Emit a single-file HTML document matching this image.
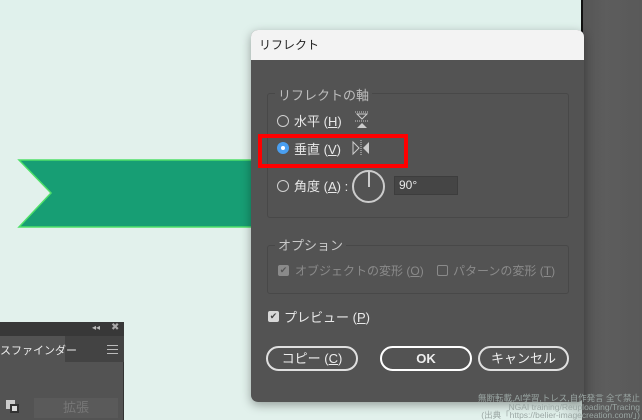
<!DOCTYPE html>
<html><head><meta charset="utf-8"><style>
*{margin:0;padding:0;box-sizing:border-box}
body{width:642px;height:420px;overflow:hidden;position:relative;background:#e2f1ec;font-family:"Liberation Sans","Noto Sans CJK JP",sans-serif;font-size:13px;color:#e8e8e8}
.a{position:absolute;white-space:nowrap}
u{text-decoration:underline}
.rad{position:absolute;width:12px;height:12px;border:1.5px solid #d0d0d0;border-radius:50%}
.btn{position:absolute;height:25px;border:2px solid #e0e0e0;border-radius:13px;text-align:center;line-height:21px;font-size:13px;color:#eee}
.cb{position:absolute;width:11px;height:11px;border-radius:2px}
</style></head><body>
<div class="a" style="left:0;top:0;width:582px;height:30px;background:#e0f1ec"></div>
<div class="a" style="left:582px;top:0;width:60px;height:420px;background:linear-gradient(90deg,#555,#5d5d5d 40%,#595959)"></div>
<div class="a" style="left:581px;top:0;width:2px;height:32px;background:#111"></div>
<div class="a" style="left:560px;top:200px;width:22px;height:220px;background:linear-gradient(90deg,#e2f1ec,#c9d6d2)"></div>
<svg class="a" style="left:0;top:150px" width="260" height="90"><polygon points="19,10 252,10 252,77 19,77 51,43" fill="#179e74" stroke="#4fe06a" stroke-width="1.5"/></svg>

<div class="a" style="left:0;top:322px;width:124px;height:98px;background:#535353;border-right:1px solid #333"></div>
<div class="a" style="left:0;top:322px;width:124px;height:14px;background:#383838"></div>
<div class="a" style="left:92px;top:323px;font-size:8px;color:#bbb">◂◂</div>
<div class="a" style="left:111px;top:322px;font-size:10px;color:#aaa">✖</div>
<div class="a" style="left:0;top:336px;width:124px;height:26px;background:#434343"></div>
<div class="a" style="left:0;top:336px;width:65px;height:26px;background:#535353"></div>
<div class="a" style="left:0;top:342px;font-size:11px;color:#eee">スファインダー</div>
<div class="a" style="left:107px;top:345px;width:11px;height:1px;background:#bbb;box-shadow:0 4px #bbb,0 8px #bbb"></div>
<div class="a" style="left:6px;top:400px;width:9px;height:9px;background:#ccc"></div>
<div class="a" style="left:10px;top:404px;width:9px;height:9px;background:#ddd;border:2px solid #333"></div>
<div class="a" style="left:34px;top:398px;width:84px;height:20px;background:#5a5a5a;color:#777;text-align:center;line-height:20px">拡張</div>

<div class="a" style="left:251px;top:30px;width:333px;height:372px;background:#535353;border-radius:7px;box-shadow:0 3px 10px rgba(0,0,0,.35);overflow:hidden">
 <div style="height:30px;background:#f3f3f3;color:#222;padding:6px 0 0 8px;font-size:12px">リフレクト</div>
</div>
<div class="a" style="left:267px;top:93px;width:302px;height:125px;border:1px solid #484848;border-radius:3px"></div>
<div class="a" style="left:275px;top:85px;background:#535353;padding:0 3px;color:#bdbdbd">リフレクトの軸</div>
<div class="rad" style="left:277px;top:115px"></div>
<div class="a" style="left:294px;top:111px">水平 (<u>H</u>)</div>
<svg class="a" style="left:354px;top:111px" width="16" height="20"><line x1="1" y1="1" x2="15" y2="1" stroke="#ccc" stroke-dasharray="1,1"/><polygon points="3,3 13,3 8,8" fill="none" stroke="#ccc"/><line x1="1" y1="10" x2="15" y2="10" stroke="#ccc" stroke-dasharray="1,1"/><polygon points="3,17 13,17 8,12" fill="#ccc"/></svg>
<div class="a" style="left:277px;top:142px;width:12px;height:12px;border-radius:50%;background:#4a9ff0"></div>
<div class="a" style="left:281px;top:146px;width:4px;height:4px;border-radius:50%;background:#fff"></div>
<div class="a" style="left:294px;top:139px">垂直 (<u>V</u>)</div>
<svg class="a" style="left:351px;top:140px" width="20" height="16"><polygon points="2,2 2,14 8,8" fill="none" stroke="#ccc"/><line x1="10" y1="0" x2="10" y2="16" stroke="#ccc" stroke-dasharray="1,1"/><polygon points="18,2 18,14 12,8" fill="#ccc"/></svg>
<div class="a" style="left:258px;top:134px;width:150px;height:34px;border:4px solid #f00"></div>
<div class="rad" style="left:277px;top:180px"></div>
<div class="a" style="left:294px;top:176px">角度 (<u>A</u>) :</div>
<div class="a" style="left:352px;top:170px;width:33px;height:33px;border:2px solid #ccc;border-radius:50%"></div>
<div class="a" style="left:368px;top:171px;width:2px;height:16px;background:#ccc"></div>
<div class="a" style="left:394px;top:176px;width:64px;height:19px;background:#454545;border:1px solid #3d3d3d;padding:1px 0 0 4px;font-size:12px">90°</div>

<div class="a" style="left:267px;top:245px;width:302px;height:49px;border:1px solid #484848;border-radius:3px"></div>
<div class="a" style="left:275px;top:235px;background:#535353;padding:0 3px;color:#c8c8c8">オプション</div>
<div class="cb" style="left:278px;top:265px;background:#8a8a8a;color:#555;font-size:9px;line-height:11px;text-align:center">✔</div>
<div class="a" style="left:295px;top:262px;color:#8a8a8a;font-size:12px">オブジェクトの変形 (<u>O</u>)</div>
<div class="cb" style="left:437px;top:265px;border:1px solid #8a8a8a"></div>
<div class="a" style="left:453px;top:262px;color:#8a8a8a;font-size:12px">パターンの変形 (<u>T</u>)</div>

<div class="cb" style="left:268px;top:311px;background:#d8d8d8;color:#444;font-size:9px;line-height:11px;text-align:center">✔</div>
<div class="a" style="left:284px;top:307px">プレビュー (<u>P</u>)</div>

<div class="btn" style="left:266px;top:346px;width:92px">コピー (<u>C</u>)</div>
<div class="btn" style="left:380px;top:346px;width:92px;font-weight:bold;border-color:#fff">OK</div>
<div class="btn" style="left:478px;top:346px;width:91px">キャンセル</div>

<div class="a" style="left:430px;top:394px;width:210px;text-align:right;font-size:8.5px;line-height:8.5px;color:#9aa6a3">無断転載,AI学習,トレス,自作発言 全て禁止<br>NGAI training/Reuploading/Tracing<br>(出典「https://belier-imagecreation.com/」)</div>
</body></html>
